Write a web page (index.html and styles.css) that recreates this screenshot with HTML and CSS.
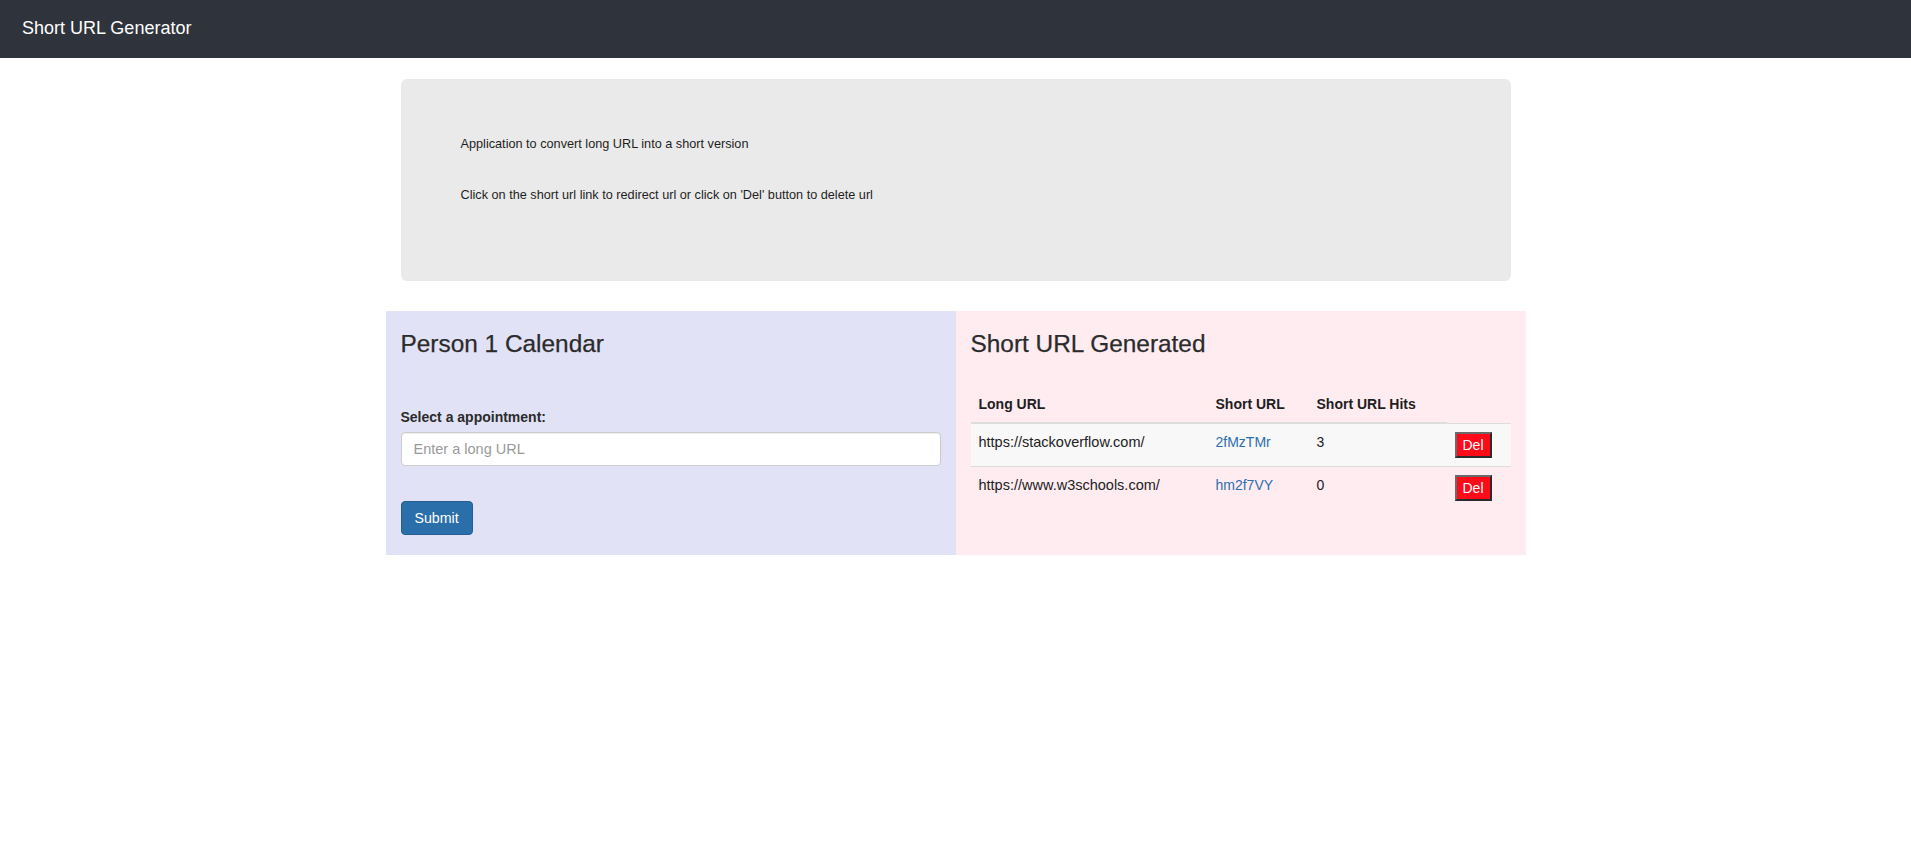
FILE: index.html
```html
<!DOCTYPE html>
<html lang="en">
<head>
<meta charset="utf-8">
<title>Short URL Generator</title>
<link rel="stylesheet" href="styles.css">
</head>
<body>
<header class="navbar">
  <span class="brand">Short URL Generator</span>
</header>
<main class="container">
  <section class="jumbotron">
    <p>Application to convert long URL into a short version</p>
    <p>Click on the short url link to redirect url or click on 'Del' button to delete url</p>
  </section>
  <div class="row">
    <section class="col col-left">
      <h3 class="heading">Person 1 Calendar</h3>
      <form class="form">
        <div class="form-group">
          <label class="label" for="url">Select a appointment:</label>
          <input class="input" id="url" type="text" placeholder="Enter a long URL">
        </div>
        <button class="btn-submit" type="button">Submit</button>
      </form>
    </section>
    <section class="col col-right">
      <h3 class="heading">Short URL Generated</h3>
      <table class="table">
        <colgroup>
          <col class="c-long">
          <col class="c-short">
          <col class="c-hits">
          <col class="c-del">
        </colgroup>
        <thead>
          <tr>
            <th>Long URL</th>
            <th>Short URL</th>
            <th>Short URL Hits</th>
          </tr>
        </thead>
        <tbody>
          <tr>
            <td class="url-cell">https://stackoverflow.com/</td>
            <td><a class="link" href="#">2fMzTMr</a></td>
            <td>3</td>
            <td><button class="btn-del" type="button">Del</button></td>
          </tr>
          <tr>
            <td class="url-cell">https://www.w3schools.com/</td>
            <td><a class="link" href="#">hm2f7VY</a></td>
            <td>0</td>
            <td><button class="btn-del" type="button">Del</button></td>
          </tr>
        </tbody>
      </table>
    </section>
  </div>
</main>
</body>
</html>
```

FILE: styles.css
```css
* { box-sizing: border-box; }

body {
  margin: 0;
  font-family: "Liberation Sans", Arial, Helvetica, sans-serif;
  font-size: 14px;
  line-height: 20px;
  color: #333;
  background: #fff;
}

.navbar {
  height: 58px;
  background: #2f333b;
  padding: 18px 22px;
  margin-bottom: 21px;
}

.brand {
  color: #fff;
  font-size: 18px;
  line-height: 20px;
}

.container {
  width: 1140px;
  margin: 0 auto;
  padding: 0 15px;
}

.jumbotron {
  background: #eaeaea;
  border-radius: 6px;
  padding: 48px 60px 52px;
  margin-bottom: 30px;
}

.jumbotron p {
  margin: 0 0 17px;
  font-size: 12.7px;
  line-height: 34px;
  color: #1e1e1e;
}

.row {
  display: flex;
  margin: 0 -15px;
}

.col {
  width: 50%;
  padding: 0 15px 20px;
}

.col-left { background: #e2e2f7; }
.col-right { background: #ffecf1; }

.heading {
  margin: 20px 0 10px;
  font-size: 24.4px;
  font-weight: normal;
  line-height: 26.4px;
  color: #2b2b2b;
  -webkit-text-stroke: 0.25px #2b2b2b;
}

.form { margin-top: 50px; }

.form-group { margin-bottom: 35px; }

.label {
  display: block;
  font-weight: bold;
  margin-bottom: 5px;
  color: #2b2b2b;
}

.input {
  display: block;
  width: 100%;
  height: 34px;
  padding: 6px 12px;
  font-family: inherit;
  font-size: 14.5px;
  line-height: 20px;
  color: #555;
  background: #fff;
  border: 1px solid #ccc;
  border-radius: 4px;
  box-shadow: inset 0 1px 1px rgba(0, 0, 0, 0.075);
}

.input::placeholder { color: #999; }

.btn-submit {
  display: block;
  height: 34px;
  padding: 6px 13px;
  font-family: inherit;
  font-size: 14.2px;
  line-height: 20px;
  color: #fff;
  background: #2a6fa9;
  border: 1px solid #255f93;
  border-radius: 4px;
}

.table {
  width: 100%;
  margin-top: 29px;
  border-collapse: collapse;
  table-layout: fixed;
}

.c-long { width: 237px; }
.c-short { width: 101px; }
.c-hits { width: 138px; }
.c-del { width: 64px; }

.table th {
  text-align: left;
  padding: 8px;
  font-weight: bold;
  line-height: 20px;
  color: #1e1e1e;
  vertical-align: bottom;
  border-bottom: 2px solid #ddd;
}

.table td {
  padding: 8px;
  line-height: 20px;
  vertical-align: top;
  border-top: 1px solid #ddd;
  color: #222;
}

.table tbody tr:nth-child(odd) td { background: #f8f8f8; }

.url-cell { font-size: 14.5px; }

.link {
  color: #2c6fad;
  text-decoration: none;
}

.btn-del {
  display: block;
  padding: 1px 6px;
  font-family: inherit;
  font-size: 14px;
  line-height: 20px;
  color: #fff;
  background: #ff0a18;
  border: 2px solid;
  border-color: #6a6a6a #2b2b2b #2b2b2b #6a6a6a;
  border-radius: 0;
}
```
